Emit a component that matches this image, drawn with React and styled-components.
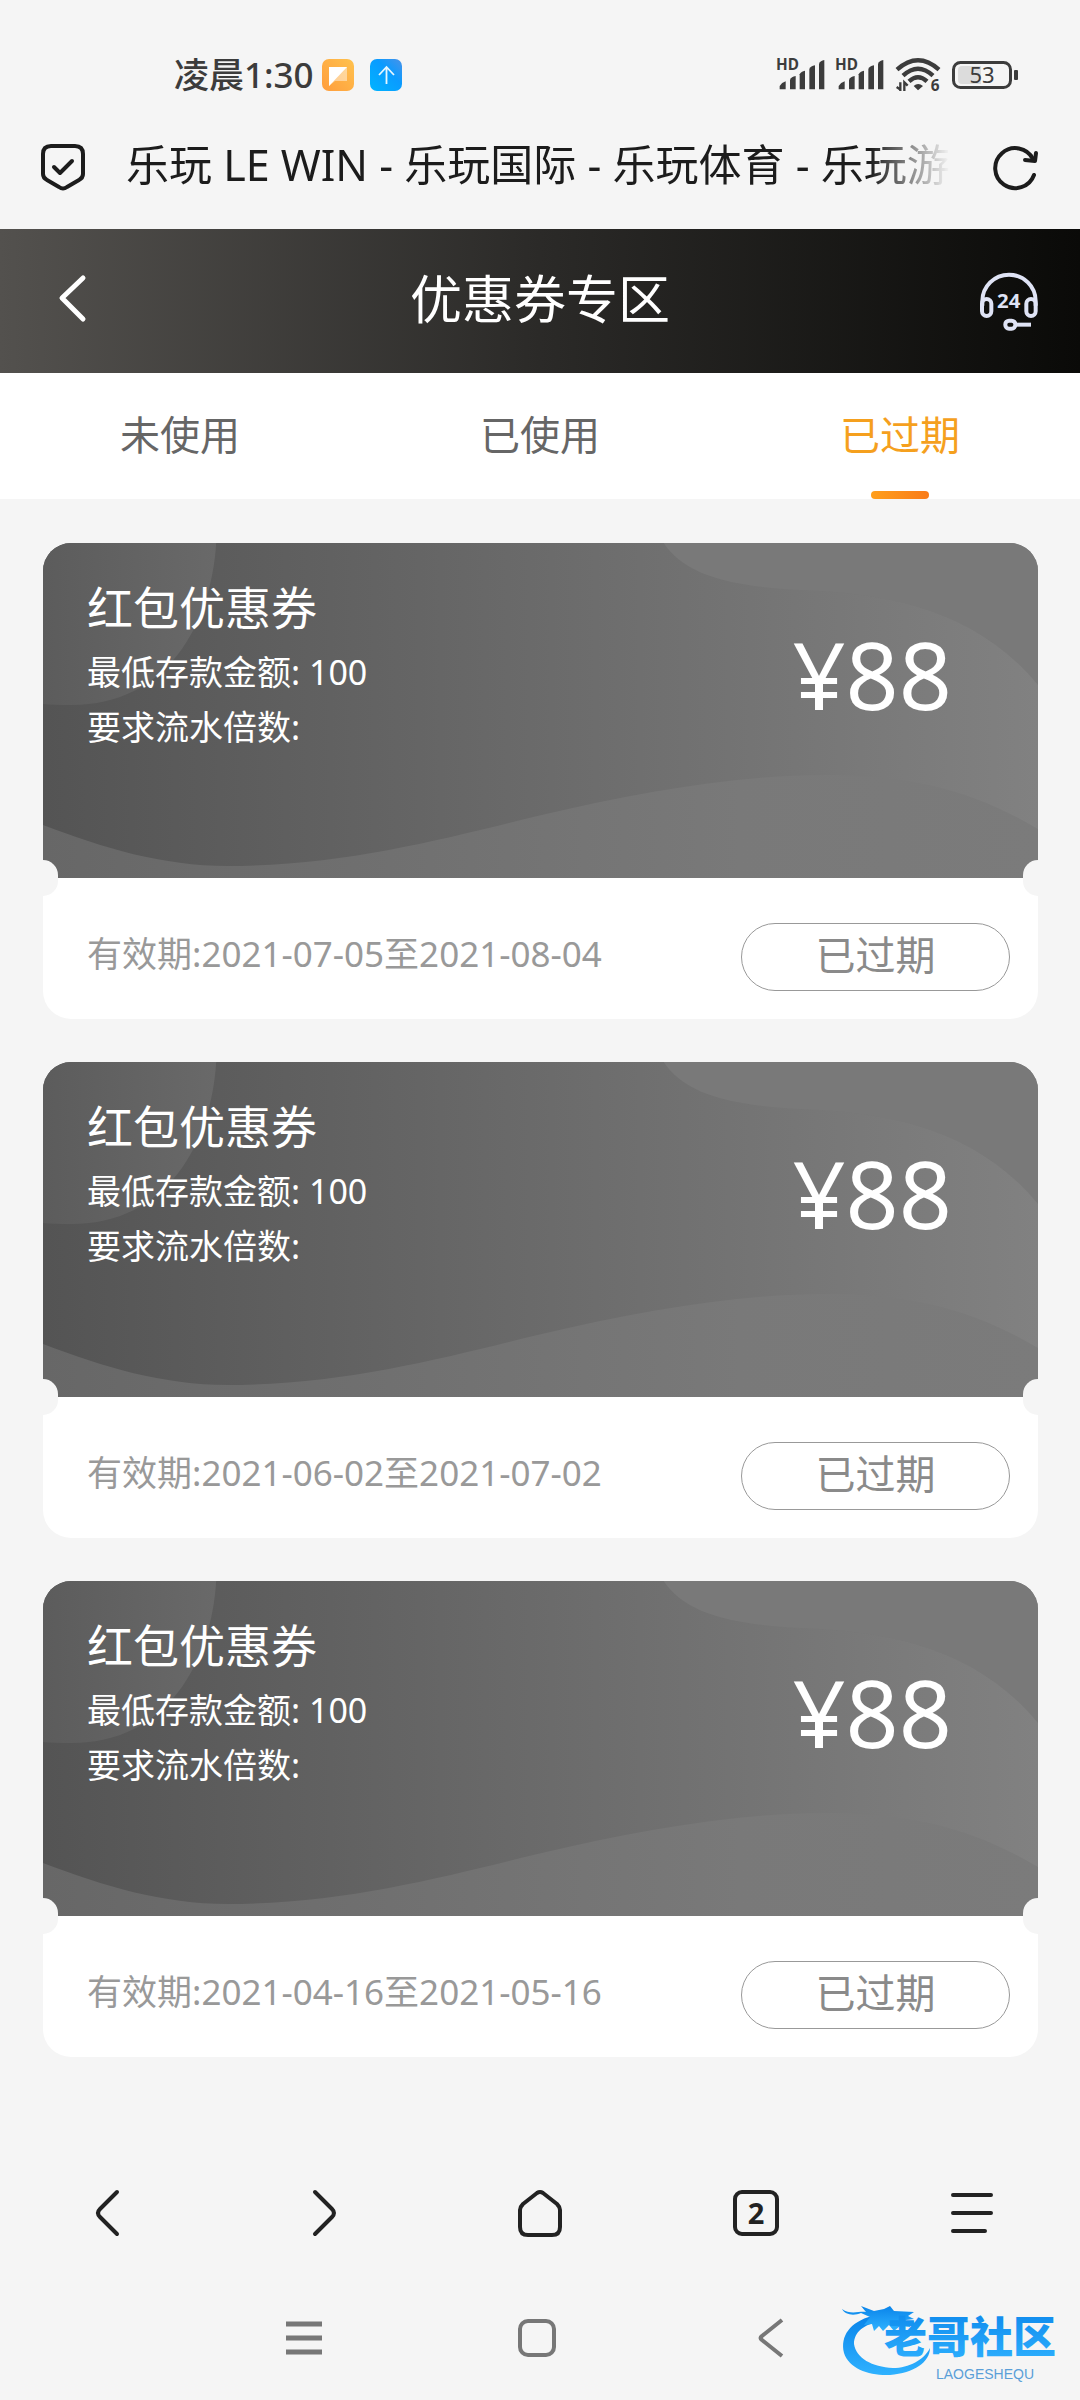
import React, {useState} from 'react';
import styled, {createGlobalStyle} from "styled-components";

const GlobalStyle = createGlobalStyle`
  * {
    box-sizing: border-box;
  }

  body {
    margin: 0;
    background-color: #f5f5f5;
    font-family: "Noto Sans", "Noto Sans CJK SC", sans-serif;
  }

  button {
    padding: 0;
    border: 0;
    background: none;
    color: inherit;
    font: inherit;
    cursor: pointer;
  }

  svg {
    display: block;
    flex: none;
    overflow: visible;
  }
`;

const Page = styled.div`
  display: flex;
  flex-direction: column;
  min-height: 100vh;
`;

const StatusBar = styled.div`
  display: flex;
  align-items: center;
  justify-content: space-between;
  height: 104px;
  padding: 46px 62px 0 174px;
  color: #3c3c3c;
`;

const StatusGroup = styled.div`
  display: flex;
  align-items: center;
  gap: ${({$gap}) => $gap}px;
`;

const Clock = styled.span`
  margin-right: -8px;
  font-size: 35px;
  line-height: 48px;
  font-weight: 500;
`;

const AddressBar = styled.div`
  display: flex;
  align-items: center;
  height: 125px;
  padding: 0 42px 0 40px;
  color: #1c1c1c;
`;

const PageTitle = styled.div`
  flex: 1;
  margin: 0 42px 0 40px;
  padding-bottom: 4px;
  overflow: hidden;
  white-space: nowrap;
  font-size: 43px;
  line-height: 56px;
  mask-image: linear-gradient(to left, transparent, #000 80px);
`;

const Header = styled.header`
  display: grid;
  grid-template-columns: 60px 1fr 60px;
  align-items: center;
  height: 144px;
  padding: 0 41px;
  background: linear-gradient(to right, #53514e, #2b2a28 50%, #0a0a08);
  color: #fff;

  h1 {
    margin: 0;
    padding-bottom: 4px;
    text-align: center;
    font-size: 52px;
    line-height: 72px;
    font-weight: 400;
  }
`;

const Tabs = styled.nav`
  display: grid;
  grid-template-columns: repeat(3, 1fr);
  height: 126px;
  background-color: #fff;
`;

const Tab = styled.button`
  display: flex;
  flex-direction: column;
  align-items: center;
  justify-content: space-between;
  padding-top: 34px;
  color: ${({$active}) => $active ? '#f5a01e' : '#666'};
  font-size: 40px;
  line-height: 56px;

  &::after {
    content: "";
    width: 58px;
    height: 8px;
    border-radius: 4px;
    background: ${({$active}) => $active ? 'linear-gradient(to right, #ff9f1c, #f97b18)' : 'none'};
  }
`;

const CouponList = styled.main`
  display: flex;
  flex: 1;
  flex-direction: column;
  gap: 43px;
  padding: 44px 42px 44px 43px;
`;

const CouponCard = styled.article`
  border-radius: 28px;
  background-color: #fff;
`;

const CouponTop = styled.div`
  position: relative;
  display: flex;
  justify-content: space-between;
  height: 335px;
  padding: 32px 86px 0 44px;
  border-radius: 28px 28px 0 0;
  background: linear-gradient(to right, #545454, #818181);
  color: #fff;

  /* half circles punched on the tear line */
  &::before,
  &::after {
    content: "";
    position: absolute;
    z-index: 1;
    bottom: -18px;
    width: 15px;
    height: 36px;
    background-color: #f5f5f5;
  }

  &::before {
    left: 0;
    border-radius: 0 18px 18px 0;
  }

  &::after {
    right: 0;
    border-radius: 18px 0 0 18px;
  }
`;

const Waves = styled.svg`
  position: absolute;
  inset: 0;
  width: 100%;
  height: 100%;
  border-radius: 28px 28px 0 0;
  overflow: hidden;
`;

const CouponInfo = styled.div`
  position: relative;

  h2 {
    margin: 0 0 6px;
    font-size: 46px;
    line-height: 64px;
    font-weight: 400;
  }

  p {
    margin: 0;
    font-size: 34px;
    line-height: 55px;
  }
`;

const Amount = styled.div`
  position: relative;
  padding-top: 35px;
  font-size: 93px;
  line-height: 128px;
`;

const CouponBottom = styled.div`
  display: flex;
  align-items: center;
  justify-content: space-between;
  height: 141px;
  padding: 16px 28px 0 44px;
  color: #999;
`;

const Validity = styled.span`
  padding-bottom: 6px;
  font-size: 35px;
  line-height: 48px;
`;

const StateButton = styled.button`
  width: 269px;
  height: 68px;
  padding-bottom: 4px;
  border: 1px solid #999;
  border-radius: 34px;
  color: #8a8a8a;
  font-size: 40px;
  line-height: 56px;
`;

const BrowserBar = styled.nav`
  display: grid;
  grid-template-columns: repeat(5, 1fr);
  height: 126px;
  color: #222;

  button {
    display: flex;
    align-items: center;
    justify-content: center;
  }
`;

const PageCount = styled.span`
  width: 46px;
  height: 46px;
  border: 4px solid #222;
  border-radius: 9px;
  text-align: center;
  font-size: 29px;
  line-height: 38px;
  font-weight: 700;
`;

const SystemBar = styled.nav`
  position: relative;
  display: flex;
  justify-content: center;
  gap: 153px;
  height: 124px;
  padding-right: 6px;
  color: #777;

  button {
    display: flex;
    align-items: center;
    justify-content: center;
    width: 80px;
  }
`;

const Watermark = styled.svg`
  position: absolute;
  right: 12px;
  bottom: 16px;
`;

const coupons = [
  {id: 1, title: '红包优惠券', min: 100, amount: 88, from: '2021-07-05', to: '2021-08-04'},
  {id: 2, title: '红包优惠券', min: 100, amount: 88, from: '2021-06-02', to: '2021-07-02'},
  {id: 3, title: '红包优惠券', min: 100, amount: 88, from: '2021-04-16', to: '2021-05-16'}
];

const tabs = ['未使用', '已使用', '已过期'];

const Signal = () => (
  <svg width="48" height="34" viewBox="0 0 144 102">
    <text x="-3" y="35" fontSize="46" fontWeight="700" fontFamily="Noto Sans" fill="currentColor">HD</text>
    <g fill="currentColor">
      <path d="M8 94V84Q14 74 26 70V94Z"/>
      <path d="M39 94V65Q43 56 56 54V94Z"/>
      <path d="M68 94V49Q72 40 84 38V94Z"/>
      <path d="M97 94V33Q101 24 114 22V94Z"/>
      <path d="M126 94V17Q130 8 142 6V94Z"/>
    </g>
  </svg>
)

const Wifi = () => (
  <svg width="46" height="36" viewBox="0 0 138 108">
    <g fill="none" stroke="currentColor" strokeWidth="13">
      <path d="M6 38Q69 -18 132 38"/>
      <path d="M24 56Q69 14 114 56"/>
      <path d="M42 73Q69 48 96 73"/>
    </g>
    <path d="M56 87Q69 75 84 87L69 100Z" fill="currentColor"/>
    <path d="M16 76V102M5 90L16 98M28 102V76L38 86" fill="none" stroke="currentColor" strokeWidth="7"/>
    <text x="107" y="102" fontSize="46" fontWeight="700" fontFamily="Noto Sans" fill="currentColor">6</text>
  </svg>
)

const Battery = () => (
  <svg width="66" height="30" viewBox="0 0 66 30">
    <rect x="1.5" y="2.5" width="57" height="25" rx="7" fill="none" stroke="currentColor" strokeWidth="3"/>
    <path d="M10 6H29V24H10Q6 24 6 20V10Q6 6 10 6Z" fill="#dcdcdc"/>
    <rect x="62" y="10" width="4" height="10" rx="1" fill="currentColor"/>
    <text x="30" y="23" textAnchor="middle" fontSize="22" fontFamily="Noto Sans" fill="currentColor">53</text>
  </svg>
)

const NoteBadge = () => (
  <svg width="32" height="32" viewBox="0 0 32 32">
    <defs>
      <linearGradient id="note" x1="0" y1="1" x2="1" y2="0">
        <stop offset="0" stopColor="#ff9d3c"/>
        <stop offset="1" stopColor="#ffc24e"/>
      </linearGradient>
    </defs>
    <rect width="32" height="32" rx="7" fill="url(#note)"/>
    <path d="M7 8H25V22H13L7 27Z" fill="#fff" opacity=".45"/>
    <path d="M7 8H25L7 27Z" fill="#fff"/>
  </svg>
)

const UploadBadge = () => (
  <svg width="32" height="32" viewBox="0 0 32 32">
    <defs>
      <linearGradient id="upload" x1="0" y1="1" x2="1" y2="0">
        <stop offset="0" stopColor="#00b4ff"/>
        <stop offset=".6" stopColor="#0a9bff"/>
        <stop offset="1" stopColor="#4a92e8"/>
      </linearGradient>
    </defs>
    <rect width="32" height="32" rx="7" fill="url(#upload)"/>
    <path d="M16.5 25V8M9 16L16.5 8L24 16" fill="none" stroke="#e6f7ff" strokeWidth="1.8"/>
  </svg>
)

const Shield = () => (
  <svg width="46" height="48" viewBox="0 0 46 48" fill="none" stroke="currentColor" strokeWidth="4"
       strokeLinecap="round" strokeLinejoin="round">
    <path d="M11 3H35Q43 3 43 11V31Q43 35 39 37L27 44Q23 47 19 44L7 37Q3 35 3 31V11Q3 3 11 3Z"/>
    <path d="M14 24L20 30L32 18"/>
  </svg>
)

const Reload = () => (
  <svg width="46" height="46" viewBox="0 0 46 46" fill="none" stroke="currentColor" strokeWidth="4"
       strokeLinecap="round" strokeLinejoin="round">
    <path d="M42 31A20 20 0 1 1 41 15"/>
    <path d="M33 16L43 17L44 9"/>
  </svg>
)

const Headset = () => (
  <svg width="60" height="60" viewBox="237 92 180 180" fill="none" stroke="#dfe3f5" strokeWidth="12">
    <path d="M247 196V182A80 79 0 0 1 407 182V196"/>
    <rect x="246" y="176" width="28" height="51" rx="14"/>
    <rect x="379" y="176" width="28" height="51" rx="14"/>
    <rect x="316" y="241" width="30" height="24" rx="11"/>
    <path d="M348 253H393"/>
    <text x="326" y="202" textAnchor="middle" fontSize="61" fontWeight="700" fontFamily="Noto Sans"
          fill="#dfe3f5" stroke="none">24</text>
  </svg>
)

const Dragon = () => (
  <Watermark width="236" height="84" viewBox="0 0 236 84">
    <defs>
      <linearGradient id="dragon" x1="0" y1="0" x2="0" y2="1">
        <stop offset="0" stopColor="#0a84ea"/>
        <stop offset="1" stopColor="#2fb2ff"/>
      </linearGradient>
    </defs>
    <g fill="url(#dragon)">
      <path d="M40 16C18 22 8 36 12 53C17 69 38 76 58 75C82 73 98 62 98 48C92 60 77 68 61 68C40 67 24 58 22 44C22 32 32 24 48 22Z"/>
      <path d="M10 9C18 15 27 11 34 12L29 6L42 11L52 9L58 6L62 11L82 12L76 16L82 19L66 21L81 22L78 27L68 26L62 31L57 25L51 31L47 26L42 31L40 24L32 25L38 17L29 13C22 16 13 15 10 9Z"/>
    </g>
    <text x="52" y="53" fontSize="43" fontWeight="900" fontFamily="Noto Sans CJK SC" fill="url(#dragon)">老哥社区</text>
    <text x="104" y="79" fontSize="14" fontFamily="Liberation Sans" fill="#5a9fd8">LAOGESHEQU</text>
  </Watermark>
)

const CouponWaves = () => (
  <Waves viewBox="0 0 994 335" preserveAspectRatio="none">
    <defs>
      <linearGradient id="blob" x1="0" y1="0" x2="1" y2="0">
        <stop offset="0" stopColor="#5c5c5c"/>
        <stop offset="1" stopColor="#696969"/>
      </linearGradient>
      <linearGradient id="wave" x1="0" y1="0" x2="1" y2="0">
        <stop offset="0" stopColor="#676767"/>
        <stop offset=".7" stopColor="#797979"/>
        <stop offset="1" stopColor="#7b7b7b"/>
      </linearGradient>
    </defs>
    <path d="M0 0H173C168 80 125 162 28 162Q12 162 0 161Z" fill="url(#blob)"/>
    <path d="M620 0C640 30 680 43 756 47C850 50 935 70 994 142V0Z" fill="#797979"/>
    <path d="M0 282C60 305 120 323 184 323C300 323 400 296 494 273C600 248 700 231 790 232C870 233 930 248 994 286V335H0Z"
          fill="url(#wave)"/>
  </Waves>
)

const Coupon = ({coupon}) => {
  const {title, min, amount, from, to} = coupon;
  return (
    <CouponCard>
      <CouponTop>
        <CouponWaves/>
        <CouponInfo>
          <h2>{title}</h2>
          <p>最低存款金额: {min}</p>
          <p>要求流水倍数:</p>
        </CouponInfo>
        <Amount>¥{amount}</Amount>
      </CouponTop>
      <CouponBottom>
        <Validity>有效期:{from}至{to}</Validity>
        <StateButton>已过期</StateButton>
      </CouponBottom>
    </CouponCard>
  )
}

const App = () => {
  const [active, setActive] = useState('已过期');

  return (
    <Page>
      <GlobalStyle/>
      <StatusBar>
        <StatusGroup $gap={16}>
          <Clock>凌晨1:30</Clock>
          <NoteBadge/>
          <UploadBadge/>
        </StatusGroup>
        <StatusGroup $gap={11}>
          <Signal/>
          <Signal/>
          <Wifi/>
          <Battery/>
        </StatusGroup>
      </StatusBar>
      <AddressBar>
        <Shield/>
        <PageTitle>乐玩 LE WIN - 乐玩国际 - 乐玩体育 - 乐玩游</PageTitle>
        <button aria-label="刷新"><Reload/></button>
      </AddressBar>
      <Header>
        <button aria-label="返回">
          <svg width="60" height="60" viewBox="0 0 60 60" fill="none" stroke="currentColor" strokeWidth="5"
               strokeLinecap="round" strokeLinejoin="round">
            <path d="M42 7L21 27L42 48"/>
          </svg>
        </button>
        <h1>优惠券专区</h1>
        <button aria-label="客服"><Headset/></button>
      </Header>
      <Tabs>
        {tabs.map(tab => (
          <Tab key={tab} $active={tab === active} onClick={() => setActive(tab)}>{tab}</Tab>
        ))}
      </Tabs>
      <CouponList>
        {coupons.map(coupon => <Coupon key={coupon.id} coupon={coupon}/>)}
      </CouponList>
      <BrowserBar>
        <button aria-label="后退">
          <svg width="48" height="48" viewBox="0 0 48 48" fill="none" stroke="currentColor" strokeWidth="4" strokeLinecap="round">
            <path d="M33 3L16 20Q12 24 16 28L33 45"/>
          </svg>
        </button>
        <button aria-label="前进">
          <svg width="48" height="48" viewBox="0 0 48 48" fill="none" stroke="currentColor" strokeWidth="4" strokeLinecap="round">
            <path d="M15 3L32 20Q36 24 32 28L15 45"/>
          </svg>
        </button>
        <button aria-label="主页">
          <svg width="48" height="48" viewBox="0 0 48 48" fill="none" stroke="currentColor" strokeWidth="4" strokeLinejoin="round">
            <path d="M21 4Q24 2 27 4L41 15Q44 18 44 21V38Q44 46 36 46H12Q4 46 4 38V21Q4 18 7 15Z"/>
          </svg>
        </button>
        <button aria-label="窗口"><PageCount>2</PageCount></button>
        <button aria-label="菜单">
          <svg width="48" height="48" viewBox="0 0 48 48" stroke="currentColor" strokeWidth="4" strokeLinecap="round">
            <path d="M5 6H43M5 24H43M5 42H37"/>
          </svg>
        </button>
      </BrowserBar>
      <SystemBar>
        <button aria-label="最近任务">
          <svg width="36" height="40" viewBox="0 0 36 40" stroke="currentColor" strokeWidth="5">
            <path d="M0 6H36M0 20H36M0 34H36"/>
          </svg>
        </button>
        <button aria-label="桌面">
          <svg width="40" height="40" viewBox="0 0 40 40" fill="none" stroke="currentColor" strokeWidth="4">
            <rect x="3" y="3" width="34" height="34" rx="8"/>
          </svg>
        </button>
        <button aria-label="系统返回">
          <svg width="40" height="40" viewBox="0 0 40 40" fill="none" stroke="currentColor" strokeWidth="4" strokeLinejoin="round">
            <path d="M32 2L12 18Q9 20 12 22L32 38"/>
          </svg>
        </button>
        <Dragon/>
      </SystemBar>
    </Page>
  )
}

export default App;
